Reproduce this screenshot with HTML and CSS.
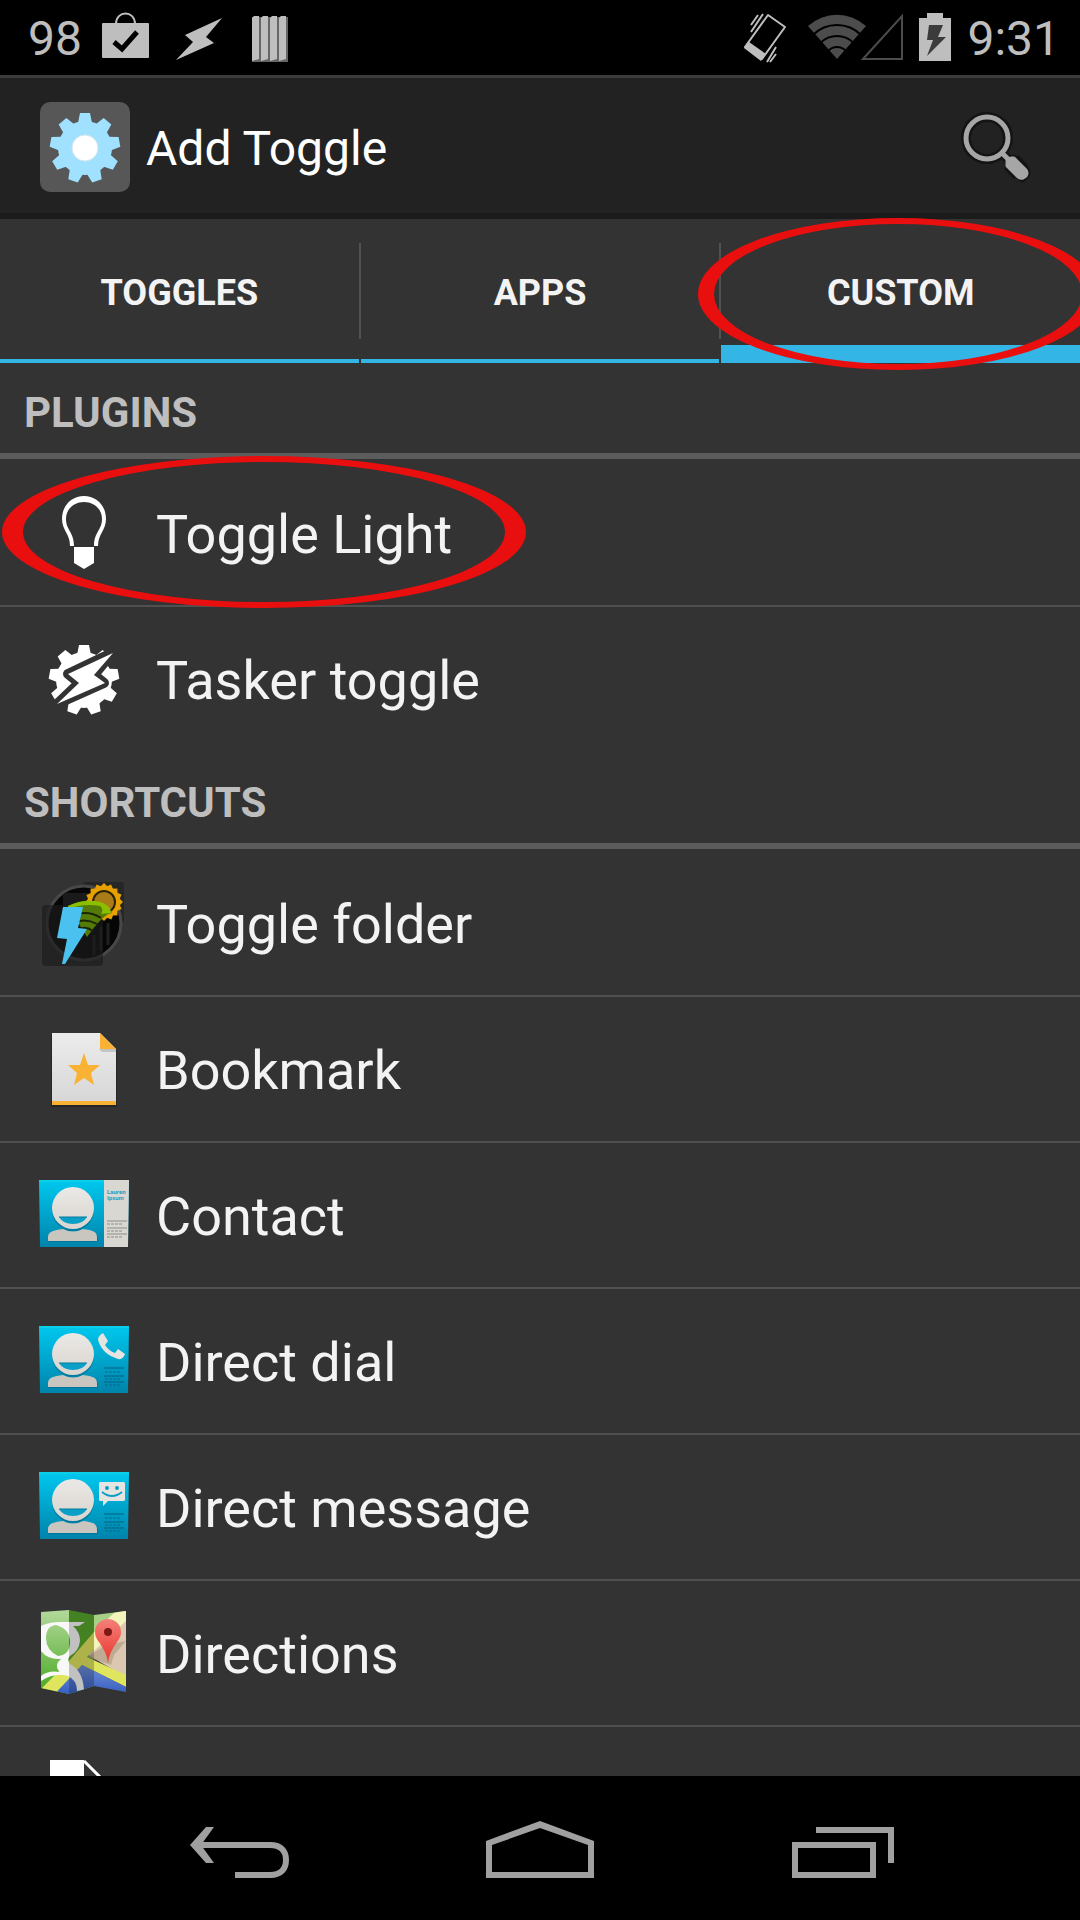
FILE: index.html
```html
<!DOCTYPE html>
<html lang="en">
<head>
<meta charset="utf-8">
<meta name="viewport" content="width=device-width, initial-scale=1">
<title>Add Toggle</title>
<link rel="stylesheet" href="styles.css">
</head>
<body>
<svg class="defs" width="0" height="0" aria-hidden="true">
  <defs>
    <linearGradient id="card" x1="0" y1="0" x2="0" y2="1"><stop offset="0" stop-color="#00c8ee"/><stop offset="1" stop-color="#0083ab"/></linearGradient>
    <linearGradient id="skin" x1="0" y1="0" x2="0" y2="1"><stop offset="0" stop-color="#ebe9e5"/><stop offset="1" stop-color="#d8d5d0"/></linearGradient>
    <linearGradient id="paper" x1="0" y1="0" x2="0" y2="1"><stop offset="0" stop-color="#ececec"/><stop offset="1" stop-color="#d6d6d6"/></linearGradient>
    <linearGradient id="grass" x1="0" y1="0" x2="0" y2="1"><stop offset="0" stop-color="#b9dca4"/><stop offset="1" stop-color="#3fa414"/></linearGradient>
    <linearGradient id="sea" x1="0" y1="0" x2="0" y2="1"><stop offset="0" stop-color="#6f8fd6"/><stop offset="1" stop-color="#2a53bd"/></linearGradient>
    <linearGradient id="pin" x1="0" y1="0" x2="0" y2="1"><stop offset="0" stop-color="#f4807a"/><stop offset="1" stop-color="#e8352c"/></linearGradient>
    <path id="tooth" d="M-5-35L5-35L7-25H-7Z"/>
    <g id="teeth">
      <use href="#tooth"/><use href="#tooth" transform="rotate(40)"/><use href="#tooth" transform="rotate(80)"/><use href="#tooth" transform="rotate(120)"/><use href="#tooth" transform="rotate(160)"/><use href="#tooth" transform="rotate(200)"/><use href="#tooth" transform="rotate(240)"/><use href="#tooth" transform="rotate(280)"/><use href="#tooth" transform="rotate(320)"/>
    </g>
    <path id="rays" d="M0-19L19 0L0 19L-19 0Z"/>
    <g id="person">
      <path fill="#04698a" opacity=".6" d="M12 75V71C12 66 17 63 27 63Q37 69 47 63C57 63 62 66 62 71V75ZM16 43a21 21 0 0 0 42 0z"/>
      <path fill="#c9c5bf" d="M12 74V70C12 65 17 63 27 62Q37 67 47 62C57 63 61 65 61 70V74Z"/>
      <circle cx="37" cy="41" r="21" fill="url(#skin)"/>
      <path fill="#0a9fc6" d="M23 50H51Q47 57 37 57T23 50Z"/>
      <path stroke="#067a9c" d="M23 50H51"/>
    </g>
    <g id="details" fill="none" stroke="#06607e">
      <path d="M68 55H88M68 63H88M68 69H88"/>
      <path stroke-width="2" stroke-dasharray="3 1" opacity=".4" d="M69 59H84M69 66H84M69 72H84"/>
    </g>
  </defs>
</svg>

<header class="status">
  <div class="status-left">
    <span class="count">98</span>
    <svg width="48" height="54" viewBox="0 0 48 54"><path fill="none" stroke="#bebebe" stroke-width="2" d="M14 13C14 -1 33 -1 33 13"/><rect y="12" width="47" height="35" rx="1" fill="#bebebe"/><path fill="none" stroke="#000" stroke-width="5" d="M12 31L20 38L35 21"/></svg>
    <svg width="48" height="54" viewBox="0 0 48 54"><path fill="#bebebe" d="M48 7L32 26L40 32L2 49L19 31L11 24Z"/></svg>
    <svg width="48" height="54" viewBox="0 0 48 54"><path fill="#666" d="M6 6H42V51H6Z"/><path fill="#bebebe" d="M6 7L8 5H13V48L6 50ZM15 7L17 5H22V48L15 50ZM24 7L26 5H31V48L24 50ZM33 7L35 5H40V48L33 50Z"/></svg>
  </div>
  <div class="status-right">
    <svg width="48" height="54" viewBox="0 0 48 54"><path fill="none" stroke="#bebebe" stroke-width="2" stroke-linejoin="round" d="M27 4L44 16L21 48L4 36Z"/><path fill="#bebebe" d="M3 37L8 31L25 43L20 50Z"/><path stroke="#bebebe" stroke-width="2" d="M10 14L17 4M10 21L22 3M26 51L35 36M29 51L35 43"/></svg>
    <svg width="98" height="54" viewBox="0 0 98 54"><path fill="#4c4c4c" d="M32 48L3 15A43 43 0 0 1 61 15Z"/><g fill="none" stroke="#000" stroke-width="2"><circle cx="32" cy="48" r="34"/><circle cx="32" cy="48" r="23"/><circle cx="32" cy="48" r="12"/></g><path fill="none" stroke="#4c4c4c" stroke-width="2" d="M58 48L97 5V48Z"/></svg>
    <svg width="32" height="54" viewBox="0 0 32 54"><path fill="#bebebe" d="M0 7H8V2H24V7H32V50H0Z"/><path fill="#3b3b3b" d="M10 14H24L19 26H27L8 45L14 29H8Z"/></svg>
    <span>9:31</span>
  </div>
</header>

<div class="action-bar">
  <svg class="app-icon" width="90" height="90" viewBox="0 0 90 90" aria-hidden="true"><rect width="90" height="90" rx="10" fill="#575757"/><g transform="translate(45 46)" fill="#a0e1ff"><circle r="27"/><use href="#teeth"/><circle r="13" fill="#fff" stroke="#d5e4ec"/></g></svg>
  <h1>Add Toggle</h1>
  <button class="search" aria-label="Search">
    <svg width="72" height="72" viewBox="0 0 72 72"><g fill="none" stroke="#141414"><circle cx="27" cy="27" r="21" stroke-width="10"/><path stroke-width="10" d="M41 41L50 50"/><path stroke-width="20" stroke-linejoin="round" d="M51 51L61 61"/><path fill="#141414" stroke-width="5" stroke-linejoin="round" d="M46 54L54 46L67 58Q70 64 62 69L46 54"/></g><circle cx="27" cy="27" r="21" fill="none" stroke="#a6a6a6" stroke-width="5"/><path stroke="#a6a6a6" stroke-width="5" d="M42 42L50 50"/><path fill="#a6a6a6" stroke="#a6a6a6" stroke-width="3" stroke-linejoin="round" d="M47 52V50L51 47H54L66 59Q68 62 66 65L63 67Q60 68 58 66L47 55Z"/></svg>
  </button>
</div>

<nav class="tabs">
  <button class="tab">TOGGLES</button>
  <button class="tab">APPS</button>
  <button class="tab active">CUSTOM
    <svg class="ring ring-tab" width="400" height="152" viewBox="0 0 400 152" aria-hidden="true"><path d="M0 76A200 76 0 0 1 400 76A200 76 0 0 1 0 76ZM16 76A184 70 0 0 0 384 76A184 70 0 0 0 16 76Z"/></svg>
  </button>
</nav>

<main class="list">
  <h2>PLUGINS</h2>
  <ul>
    <li><button class="row">
      <svg width="96" height="96" viewBox="0 0 96 96"><path fill="#fff" fill-rule="evenodd" d="M34 61C34 49 26 45 26 34C26 20 36 11 48 11S70 20 70 34C70 45 62 49 62 61H58C58 47 66 45 66 34C66 24 58 17 48 17S30 24 30 34C30 45 38 47 38 61Z"/><path fill="#fff" d="M38 62H58V78L48 84L38 78Z"/></svg>
      <span>Toggle Light</span>
      <svg class="ring ring-row" width="524" height="152" viewBox="0 0 524 152" aria-hidden="true"><path d="M0 76A262 76 0 0 1 524 76A262 76 0 0 1 0 76ZM21 76A241 70 0 0 0 503 76A241 70 0 0 0 21 76Z"/></svg>
    </button></li>
    <li><button class="row">
      <svg width="96" height="96" viewBox="0 0 96 96"><g transform="translate(48 49)" fill="#fff"><circle r="28"/><use href="#teeth"/></g><path fill="#333" stroke="#333" stroke-width="10" stroke-linejoin="round" d="M76 22L58 44L68 52L21 73L43 52L32 43Z"/><path fill="#fff" d="M77 22L58 44L69 52L21 73L43 52L32 43Z"/></svg>
      <span>Tasker toggle</span>
    </button></li>
  </ul>
  <h2>SHORTCUTS</h2>
  <ul>
    <li><button class="row">
      <svg width="96" height="96" viewBox="0 0 96 96"><rect x="47" y="7" width="41" height="41" rx="3" fill="#262626"/><circle cx="48" cy="48" r="37" fill="#060606" stroke="#484848" stroke-width="3"/><rect x="27" y="18" width="34" height="34" rx="3" fill="#1a1a1a"/><path stroke="#202020" stroke-width="3" d="M58 60V80M65 52V76M72 48V70"/><rect x="6" y="30" width="61" height="61" rx="4" fill="#1c1c1c" opacity=".65"/><g transform="translate(68 27)" fill="#e6a100"><use href="#rays"/><use href="#rays" transform="rotate(22)"/><use href="#rays" transform="rotate(45)"/><use href="#rays" transform="rotate(67)"/><circle r="11" fill="#a97c18" stroke="#2a2206" stroke-width="2"/></g><path fill="#547b08" d="M51 62L32 31Q50 22 68 30L76 38Q68 38 51 62Z"/><path fill="#8abf00" d="M32 31Q48 23 65 27Q75 31 75 38L65 39Q68 34 64 31Q48 28 32 34Z"/><path fill="none" stroke="#1a2504" stroke-width="2" d="M42 39Q54 36 65 43M43 46Q52 44 61 49M44 54Q50 51 57 56"/><path fill="#4ac1ee" d="M27 32H47L42 53L51 54L29 89H26L31 64L21 63Z"/></svg>
      <span>Toggle folder</span>
    </button></li>
    <li><button class="row">
      <svg width="96" height="96" viewBox="0 0 96 96"><path fill="#262626" d="M15 14H64L81 30V86H15Z"/><path fill="url(#paper)" d="M16 12H64L80 28V84H16Z"/><path fill="#c4c4c4" d="M63 28H80V31H66Z"/><path fill="#f9b233" d="M64 12L80 28H64ZM16 80H80V84H16ZM48 32L52 44H64L55 52L58 64L48 57L38 64L41 52L32 44H44Z"/></svg>
      <span>Bookmark</span>
    </button></li>
    <li><button class="row">
      <svg width="96" height="96" viewBox="0 0 96 96"><path fill="url(#card)" d="M3 13H93L92 80H4Z"/><path fill="#d9d7d2" d="M68 13H93L92 80H68Z"/><path stroke="#17d7e4" d="M3 14H68"/><use href="#person"/><g fill="#1b9fc4" font-family="Roboto, sans-serif" font-size="6" font-weight="700"><text x="71" y="27">Lauren</text><text x="71" y="33">Ipsum</text></g><g stroke="#8f8d89"><path d="M71 54H91M71 61H91M71 67H91"/><path stroke-width="2" stroke-dasharray="3 1" opacity=".5" d="M71 57H87M71 64H87M71 70H87"/></g></svg>
      <span>Contact</span>
    </button></li>
    <li><button class="row">
      <svg width="96" height="96" viewBox="0 0 96 96"><path fill="url(#card)" d="M3 13H93L92 80H4Z"/><path stroke="#17d7e4" d="M3 14H93"/><use href="#person"/><use href="#details"/><path fill="#e6e4e0" d="M67 20L72 28L69 32Q73 38 79 40L82 36L89 41Q87 47 82 46Q66 41 62 27Q62 23 67 20Z"/></svg>
      <span>Direct dial</span>
    </button></li>
    <li><button class="row">
      <svg width="96" height="96" viewBox="0 0 96 96"><path fill="url(#card)" d="M3 13H93L92 80H4Z"/><path stroke="#17d7e4" d="M3 14H93"/><use href="#person"/><use href="#details"/><path fill="#e6e4e0" d="M64 23H88L89 24V41L88 42H72L67 47V42H64L63 41V24Z"/><g fill="#0a9fc6"><circle cx="71" cy="29" r="2"/><circle cx="81" cy="29" r="2"/></g><path fill="none" stroke="#0a9fc6" stroke-width="2" d="M66 33Q76 41 86 33"/></svg>
      <span>Direct message</span>
    </button></li>
    <li><button class="row">
      <svg width="96" height="96" viewBox="0 0 96 96"><clipPath id="sheet"><path d="M5 7L33 5L58 10L90 6V87L58 81L33 89L5 83Z"/></clipPath><g clip-path="url(#sheet)"><path fill="url(#grass)" d="M5 0H33V96H5Z"/><path fill="#57a62c" d="M33 0H58V96H33Z"/><path fill="#a7d086" d="M58 0H90V20L58 44Z"/><path fill="#dcc8b0" d="M90 14L52 50L90 72Z"/><path fill="#ab9880" d="M90 36L70 40L51 52L75 60L78 50Z" opacity=".6"/><path fill="#e0e560" d="M58 27L32 57L5 84V96H14L46 60L90 82V70L51 52L58 44Z"/><path fill="#f3f5bd" d="M78 8L90 5V16L58 46V27Z"/><path fill="url(#sea)" d="M46 60L90 82V96H12Z"/><path fill="#f8f8f8" fill-rule="evenodd" d="M5 21Q13 17 24 17H49L43 21H37Q44 27 44 36Q43 46 34 51Q30 55 34 59Q47 66 48 85L41 86Q41 75 32 71Q19 67 5 76V71Q12 65 24 67Q17 60 25 54Q12 55 5 46ZM20 20Q10 21 10 33T22 51Q34 50 34 37T20 20Z"/><path fill="#000" opacity=".22" d="M33 0L58 10V96H33Z"/></g><path fill="url(#pin)" d="M72 58Q71 48 63 37Q59 32 59 27A13 13 0 0 1 85 27Q85 32 81 37Q73 48 72 58Z"/><circle cx="72" cy="27" r="4" fill="#7f1915"/></svg>
      <span>Directions</span>
    </button></li>
    <li><button class="row" aria-label="Document">
      <svg width="96" height="96" viewBox="0 0 96 96"><path fill="#fff" d="M14 9H48V43H82V87H14Z"/><path fill="none" stroke="#fff" stroke-width="3" d="M48 10L81 43"/></svg>
    </button></li>
  </ul>
</main>

<footer class="system-nav">
  <button aria-label="Back"><svg width="120" height="60" viewBox="0 0 120 60"><path fill="none" stroke="#a0a0a0" stroke-width="6" d="M18 27H90C102 27 106 34 106 42S102 57 90 57H55"/><path fill="#a0a0a0" d="M26 9H34L21 27L34 45H26L10 27Z"/></svg></button>
  <button aria-label="Home"><svg width="120" height="60" viewBox="0 0 120 60"><path fill="#a0a0a0" fill-rule="evenodd" d="M6 23L60 3L114 23V60H6ZM12 27V54H108V27L60 10Z"/></svg></button>
  <button aria-label="Recent apps"><svg width="120" height="60" viewBox="0 0 120 60"><path fill="#a0a0a0" fill-rule="evenodd" d="M12 24H96V60H12ZM18 30V54H90V30ZM36 9H114V45H108V15H36Z"/></svg></button>
</footer>
</body>
</html>
```
FILE: styles.css
```css
* { box-sizing: border-box; }

body {
  margin: 0;
  height: 100vh;
  display: flex;
  flex-direction: column;
  overflow: hidden;
  background: #333;
  color: #f3f3f3;
  font-family: Roboto, "Noto Sans", sans-serif;
}

svg { display: block; flex: none; }

.defs { position: absolute; }

button {
  margin: 0;
  padding: 0;
  border: 0;
  background: none;
  color: inherit;
  font: inherit;
}

.status {
  display: flex;
  justify-content: space-between;
  align-items: center;
  height: 78px;
  padding: 0 20px 0 28px;
  border-bottom: 3px solid #3b3b3b;
  background: #000;
  color: #bebebe;
  font-size: 48px;
  line-height: 54px;
}

.status span { padding-top: 2px; }
.count { width: 50px; }

.status-left,
.status-right { display: flex; align-items: center; }
.status-left { gap: 24px; }
.status-right { gap: 16px; }

.action-bar {
  display: flex;
  align-items: center;
  gap: 16px;
  padding: 24px 48px 21px 40px;
  border-bottom: 6px solid #1b1b1b;
  background: #222;
}

h1 {
  flex: 1;
  margin: 0;
  padding-top: 4px;
  color: #fff;
  font-size: 48px;
  font-weight: 400;
  line-height: 56px;
}

.tabs {
  position: relative;
  z-index: 1;
  display: flex;
  gap: 2px;
}

.tab {
  position: relative;
  flex: 1;
  height: 144px;
  padding-top: 8px;
  border-bottom: 4px solid #33b5e5;
  font-size: 36px;
  font-weight: 700;
  line-height: 42px;
}

.tab.active { box-shadow: inset 0 -14px #33b5e5; }

.tab + .tab::before {
  content: "";
  position: absolute;
  left: -2px;
  top: 24px;
  width: 2px;
  height: 96px;
  background: #505050;
}

.ring {
  position: absolute;
  fill: #e90f0f;
  pointer-events: none;
}

.ring-tab { left: -23px; top: -1px; }
.ring-row { left: 2px; top: -5px; }

.list {
  flex: 1;
  min-height: 0;
  overflow: hidden;
}

h2 {
  margin: 0 0 2px;
  padding: 26px 24px 16px;
  border-bottom: 6px solid #5c5c5c;
  color: #bebebe;
  font-size: 42px;
  font-weight: 700;
  line-height: 48px;
}

ul {
  margin: 0;
  padding: 0;
  list-style: none;
}

li { border-bottom: 2px solid #505050; }
li:last-child { border-color: transparent; }

.row {
  position: relative;
  display: flex;
  align-items: center;
  gap: 24px;
  width: 100%;
  height: 144px;
  padding: 0 36px;
  font-size: 54px;
  line-height: 64px;
  text-align: left;
}

.row span { padding-top: 4px; }

.system-nav {
  display: flex;
  justify-content: center;
  background: #000;
}

.system-nav button {
  display: flex;
  justify-content: center;
  align-items: center;
  width: 300px;
  height: 144px;
}
```
